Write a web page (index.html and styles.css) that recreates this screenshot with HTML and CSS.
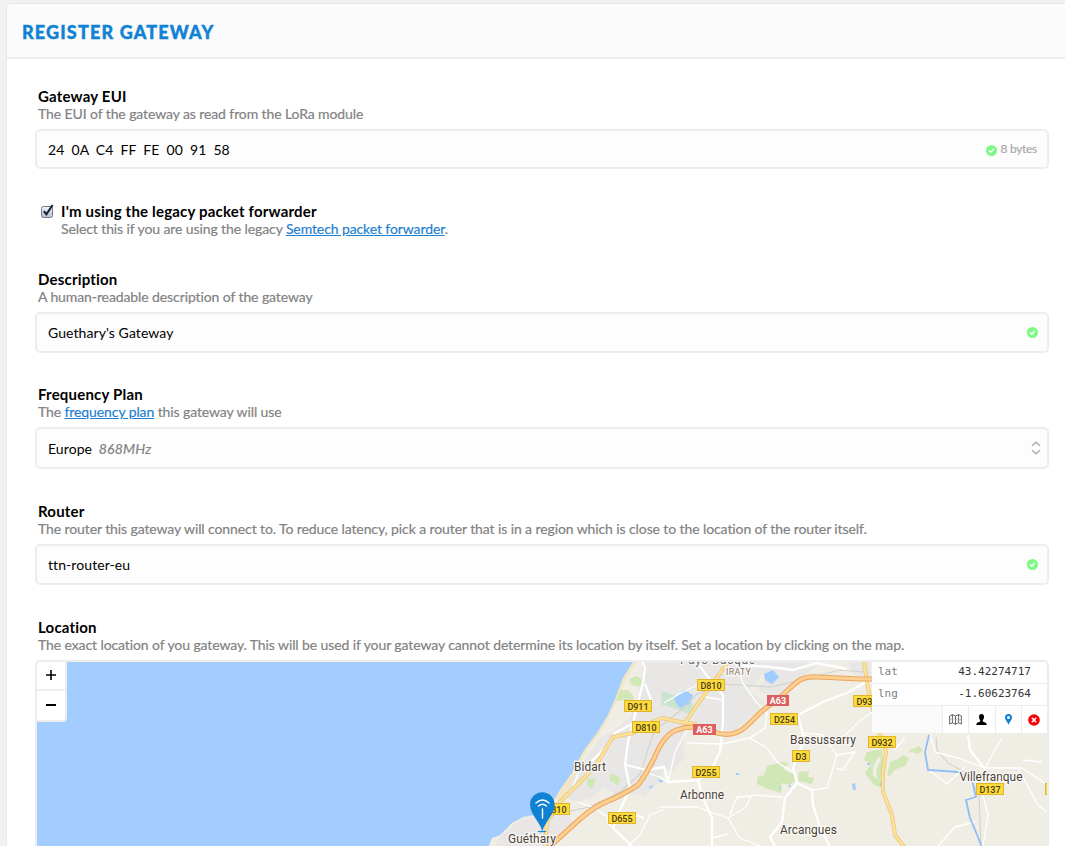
FILE: index.html
```html
<!DOCTYPE html>
<html lang="en">
<head>
<meta charset="utf-8">
<title>Register Gateway</title>
<link rel="stylesheet" href="styles.css">
</head>
<body>
<svg class="defs" width="0" height="0">
  <symbol id="ok" viewBox="0 0 11 11"><circle cx="5.5" cy="5.5" r="5.5" fill="#7bfb85"/><path d="M3 5.6 4.9 7.3 8 3.7" fill="none" stroke="#fff" stroke-width="1.5"/></symbol>
</svg>
<main class="card">
  <header class="card-header"><h1 class="title">REGISTER GATEWAY</h1></header>
  <form class="form">
    <section class="field">
      <label class="label">Gateway EUI</label>
      <p class="hint">The EUI of the gateway as read from the LoRa module</p>
      <div class="box box-eui"><span class="eui">24 0A C4 FF FE 00 91 58</span><span class="status"><svg class="ok"><use href="#ok"/></svg><span class="bytes">8 bytes</span></span></div>
    </section>
    <section class="field field-check">
      <svg class="checkbox" viewBox="0 0 14 15"><defs><linearGradient id="cb" x2="0" y2="1"><stop stop-color="#f4f6fa"/><stop offset="1" stop-color="#b4bfd0"/></linearGradient></defs><rect x="1.5" y="2.5" width="11" height="11" rx="2" fill="url(#cb)" stroke="#727986"/><path d="M3.8 7.2 6.4 10.3 12.6 1" fill="none" stroke="#172033" stroke-width="2.1"/></svg>
      <div>
        <label class="label label-check">I'm using the legacy packet forwarder</label>
        <p class="hint hint-check">Select this if you are using the legacy <a class="link">Semtech packet forwarder</a>.</p>
      </div>
    </section>
    <section class="field field-desc">
      <label class="label">Description</label>
      <p class="hint">A human-readable description of the gateway</p>
      <div class="box"><span>Guethary's Gateway</span><svg class="ok"><use href="#ok"/></svg></div>
    </section>
    <section class="field field-plan">
      <label class="label">Frequency Plan</label>
      <p class="hint">The <a class="link">frequency plan</a> this gateway will use</p>
      <div class="box box-plan"><span class="plan">Europe <em class="mhz">868MHz</em></span><svg class="sorter" viewBox="0 0 10 14"><path d="M1 4.8 5 1.2 9 4.8M1 9.2 5 12.8 9 9.2" fill="none" stroke="#aaa" stroke-width="1.3"/></svg></div>
    </section>
    <section class="field">
      <label class="label">Router</label>
      <p class="hint">The router this gateway will connect to. To reduce latency, pick a router that is in a region which is close to the location of the router itself.</p>
      <div class="box"><span>ttn-router-eu</span><svg class="ok"><use href="#ok"/></svg></div>
    </section>
    <section class="field">
      <label class="label">Location</label>
      <p class="hint">The exact location of you gateway. This will be used if your gateway cannot determine its location by itself. Set a location by clicking on the map.</p>
      <div class="map">
        <svg class="tiles" viewBox="37 662 1010 186">
          <rect x="37" y="662" width="1010" height="186" fill="#a3ccff"/>
          <path fill="#f0ede5" d="M633 662 623 678 616 697 608 715 597 733 583 752 572 773 560 790 554 800 535 815 523 817 512 823 500 835 492 838 488 848H1047V662Z"/>
          <g fill="#e8e7e6">
            <path d="M643 662H754L762 674 749 691 765 703 748 719 735 730 707 730 690 723 681 743 682 762 667 767 658 783 644 797 629 792 619 796 604 787 594 797 578 802 563 797 571 781 585 760 600 738 615 730 630 717 638 697Z"/>
            <path d="M536 817 520 820 500 836 494 848H547L575 824 564 809ZM748 662H801L817 667 797 680 778 698 758 691 766 676Z"/>
            <path d="M660 732 683 736 685 757 672 772 660 764ZM848 662H870V678L857 680Z"/>
          </g>
          <path fill="#f4e3b4" d="M633 662 623 678 616 697 608 715 597 733 583 752 572 773 560 790 554 800 562 801 570 786 577 769 587 750 600 733 610 715 618 697 626 679 636 662Z" opacity=".7"/>
          <g fill="#d2e7b6">
            <path d="m629 679 8-3 7 5-2 6-11-2ZM620 690l8 0 6 7-1 4-8-1-9 1Z"/>
            <path d="m610 774 7 1 3 5-2 5-8-4ZM587 778l5 1 4-1-2 6-2 5-5-3Z"/>
            <path d="m757 777 7-2 3-9 15-4 7 1-6 6 10 5 4 6-8 5-7-2-1 10-13-4-11-5ZM799 772l10-1-1 6 6 1-2 6-14-3Z"/>
            <path fill-rule="evenodd" d="m867 752 15-3 2 17-2 22-8-3-9-12 6-9-7-4ZM873 767l5-10 3 2-5 12 2 8-5-3ZM890 762l8-3 5-4 6 3-4 8-11 4-4 6-3-1ZM908 751l11-5 4 4-5 4Z"/>
          </g>
          <path fill="#cae4ce" d="m661 691 18 6 9-8 3 13 5 8-5 5-20-8-9-2Z"/>
          <g fill="#a0ccff">
            <path d="m674 698 10-8 9 5-3 9-10 4-4-5ZM764 674l9-4 6 7-7 7-7-4ZM649 787l3-2 1 1-3 3ZM658 779l6 2-4 2ZM852 784l3-1 1 7-3 0ZM778 787l3 1-1 2ZM788 785l3 0-1 3ZM736 773h3v2h-3ZM867 763h3v2h-3ZM880 782l2 0v4h-2Z"/>
          </g>
          <g fill="none" stroke="#d3d1ce" stroke-width="1.1">
            <path d="M550 815 590 807 620 792 640 774 654 731 680 711 697 694 723 684 770 687 793 682 840 670 863 672M936 737 937 750 948 763 968 774 979 795 981 846"/>
          </g>
          <g fill="none" stroke="#fff" stroke-width="1.3" stroke-linejoin="round">
            <path d="M664 703 681 693 706 681M700 696 723 700M742 682 757 703 767 713 765 728 750 738 722 744 687 743M750 738 767 748 777 762 792 772M805 733 823 735 837 755 827 788 813 790M837 755 855 752 843 770 836 768M660 807 697 807 710 812 728 818 745 808 752 795 783 797M728 818 740 838 760 846M712 838 728 834M730 815 737 797 752 796M803 735 837 743 861 720 872 712M663 810 650 815 640 835 628 846M667 782 660 777 650 774M688 728 675 752 668 782M577 802 593 807 608 817 608 823 613 828M583 762 574 784 571 793"/>
            <path d="M930 735 935 752 958 758 985 768 1002 738M985 768 1022 768 1037 778 1047 785M982 792 988 815 983 846M938 846 955 827 975 822M1023 760 1042 762M1018 768 1038 805 1047 812M965 767 947 784 929 770M905 738 894 750M735 662 743 682"/>
          </g>
          <g fill="none" stroke="#fff" stroke-width="2.3" stroke-linejoin="round">
            <path d="M643 662 645 668 643 682 635 715 628 742 625 765 630 788 620 810 613 828 632 846M645 684 652 702M613 734 632 724M605 748 591 762M626 765 647 770 664 767 668 782 698 780M697 662 710 680 723 695 723 722 720 752 710 772 698 780 703 798 712 818 712 846"/>
            <path d="M866 682 847 693 823 702 798 715 803 735 802 745 793 768 797 783 785 798 782 822 770 837 775 846M797 783 812 790 813 805 820 828 830 846M740 665 770 667 793 670 817 663 847 669"/>
            <path d="M968 735 970 750 984 768 986 780 980 790M608 822 630 813 644 818"/>
          </g>
          <path fill="none" stroke="#8fbdf8" stroke-width="1.8" d="M929 735 925 752 928 770 958 772 972 780 976 797 966 800 970 818 978 837 982 848"/>
          <path fill="none" stroke="#e9c477" stroke-width="4" stroke-linejoin="round" d="M697 724 685 723 662 718 650 723 633 733 613 737 605 750 598 762 587 775 560 802 547 822 545 848M685 723 697 705 728 662M864 662 867 682 870 698 880 735 886 752 883 772 883 792 892 815 895 835 905 848"/>
          <path fill="none" stroke="#fbe19a" stroke-width="2.6" stroke-linejoin="round" d="M697 724 685 723 662 718 650 723 633 733 613 737 605 750 598 762 587 775 560 802 547 822 545 848M685 723 697 705 728 662M864 662 867 682 870 698 880 735 886 752 883 772 883 792 892 815 895 835 905 848"/>
          <path fill="none" stroke="#e9a762" stroke-width="5.2" stroke-linejoin="round" d="M548 848 580 819Q595 806 608 801T638 785Q648 772 657 752T680 729Q693 724 717 733Q732 737 743 729C752 722 760 711 770 705C783 697 790 686 800 680Q807 676 818 677L860 679H872"/>
          <path fill="none" stroke="#ffcf91" stroke-width="3" stroke-linejoin="round" d="M548 848 580 819Q595 806 608 801T638 785Q648 772 657 752T680 729Q693 724 717 733Q732 737 743 729C752 722 760 711 770 705C783 697 790 686 800 680Q807 676 818 677L860 679H872"/>
          <g class="shield">
            <rect x="697.5" y="679.5" width="27" height="11"/><rect x="624.5" y="700.5" width="27" height="11"/><rect x="632.5" y="721.5" width="27" height="11"/><rect x="542.5" y="803.5" width="27" height="11"/><rect x="608.5" y="812.5" width="27" height="11"/><rect x="770.5" y="713.5" width="27" height="11"/><rect x="792.5" y="750.5" width="17" height="11"/><rect x="692.5" y="766.5" width="27" height="11"/><rect x="853.5" y="695.5" width="27" height="11"/><rect x="868.5" y="736.5" width="27" height="11"/><rect x="976.5" y="783.5" width="27" height="11"/><rect x="1045.5" y="783.5" width="27" height="11"/>
          </g>
          <g fill="#dc6062"><rect x="767" y="695" width="22" height="11"/><rect x="693" y="724" width="23" height="11"/></g>
          <g class="shield-text">
            <text x="711" y="688.5">D810</text><text x="638" y="709.5">D911</text><text x="646" y="730.5">D810</text><text x="556" y="812.5">D810</text><text x="622" y="821.5">D655</text><text x="784.5" y="722.5">D254</text><text x="801" y="759.5">D3</text><text x="706" y="775.5">D255</text><text x="867" y="704.5">D932</text><text x="882" y="745.5">D932</text><text x="990" y="792.5">D137</text>
            <text class="white" x="778" y="704">A63</text><text class="white" x="704.5" y="733">A63</text>
          </g>
          <g class="town">
            <text x="574" y="770.500" textLength="32">Bidart</text><text x="508" y="842.500" textLength="48">Guéthary</text><text x="680" y="798.500" textLength="44">Arbonne</text><text x="790" y="743.500" textLength="66">Bassussarry</text><text x="780" y="833.500" textLength="57">Arcangues</text><text x="959.5" y="780.500" textLength="63">Villefranque</text><text class="region" x="680" y="663.5" textLength="75">Pays Basque</text><text class="station" x="726" y="675" textLength="25">IRATY</text>
          </g>
          <ellipse cx="542" cy="831.5" rx="4.5" ry=".8" fill="#1683d4"/>
          <path fill="#1182d3" d="M542.3 831C540 822 530 814 530 804.500A12.300 12.300 0 0 1 554.600 804.500C554.600 814 545 822 542.300 831Z"/>
          <path fill="none" stroke="#fff" stroke-width="1.4" stroke-linecap="round" d="M542.500 809V818M538.500 806Q542.500 802.500 546.500 806M536 803Q542.500 797 549 803"/>
        </svg>
        <div class="zoom"><span class="zoom-btn zoom-in"><svg viewBox="0 0 10 10"><path d="M0 5H10M5 0V10" stroke="#000" stroke-width="1.6"/></svg></span><span class="zoom-btn"><svg viewBox="0 0 10 10"><path d="M0 5H10" stroke="#000" stroke-width="1.8"/></svg></span></div>
        <div class="coords">
          <div class="coord"><span class="key">lat</span><span>43.42274717</span></div>
          <div class="coord"><span class="key">lng</span><span>-1.60623764</span></div>
          <div class="tools">
            <span class="tool"><svg width="13" height="11" viewBox="0 0 13 11"><path d="M.6 2 3.400.6 6.500 2 9.600.6 12.400 2V10L9.600 8.800 6.500 10.300 3.400 8.800.6 10ZM3.400.6V8.800M6.500 2V10.300M9.600.6V8.800" fill="none" stroke="#555" stroke-width=".9"/><path d="M.6 5.800 3.400 4.400 6.500 5.200 9.600 6.500 12.400 4.500" fill="none" stroke="#999" stroke-width=".6"/></svg></span>
            <span class="tool"><svg width="11" height="11" viewBox="0 0 11 11"><path d="M5.500 0C7.400 0 8.200 1.300 8 3.200 7.900 4.600 7.200 5.500 6.800 6.100V7.500L10.200 9 10.800 11H.2L.8 9 4.200 7.500V6.100C3.800 5.500 3.100 4.600 3 3.200 2.800 1.300 3.600 0 5.500 0Z"/></svg></span>
            <span class="tool"><svg width="7" height="11" viewBox="0 0 7 11"><path fill-rule="evenodd" fill="#1182d3" d="M3.500 11C2.500 7.500 0 6 0 3.500A3.500 3.500 0 0 1 7 3.500C7 6 4.500 7.500 3.500 11ZM3.500 2A1.500 1.500 0 1 0 3.500 5 1.500 1.500 0 0 0 3.500 2Z"/></svg></span>
            <span class="tool"><svg width="12" height="12" viewBox="0 0 12 12"><circle cx="6" cy="6" r="5.800" fill="#f80000"/><path d="m3.800 3.800 4.400 4.400M8.200 3.800 3.800 8.200" stroke="#fff" stroke-width="1.500"/></svg></span>
          </div>
        </div>
      </div>
    </section>
  </form>
</main>
</body>
</html>
```
FILE: styles.css
```css
* { box-sizing: border-box; }
html, body { height: 846px; overflow: hidden; }
body { margin: 0; padding: 3px 0 0 6px; background: #f1f1f1; font-family: Lato, sans-serif; font-size: 14px; color: #000; }
.defs { position: absolute; }
.card { height: 860px; background: #fff; border: 1px solid #e9e9e9; border-right: 0; border-top-left-radius: 5px; overflow: hidden; }
.card-header { height: 55px; background: #fbfbfb; border-bottom: 2px solid #ededed; padding: 0 15px; display: flex; align-items: center; }
.title { margin: 3px 0 0; font-size: 18px; line-height: 24px; font-weight: 900; letter-spacing: 1.15px; color: #1182d3; -webkit-text-stroke: .4px #1182d3; white-space: nowrap; }
.form { padding: 28px 16px 0 28px; }
.field { margin-bottom: 33px; }
.field-check { display: flex; margin-bottom: 32px; padding-left: 5px; }
.field-desc { margin-bottom: 32px; }
.checkbox { width: 14px; height: 15px; margin: 2px 7px 0 0; flex: none; }
.label { display: block; margin-left: 3px; font-size: 15px; line-height: 18px; font-weight: 700; letter-spacing: .19px; white-space: nowrap; }
.hint { margin: 0 0 6px 3px; line-height: 18px; letter-spacing: -.1px; color: #828282; -webkit-text-stroke: .2px #828282; white-space: nowrap; }
.label-check, .hint-check { margin-left: 0; margin-bottom: 0; }
.link { color: #1f7fd0; -webkit-text-stroke-color: #1f7fd0; text-decoration: underline; }
.box { height: 41px; border: 2px solid #ededed; border-radius: 5px; background: #fdfdfd; padding: 0 9px 0 11px; display: flex; align-items: center; justify-content: space-between; line-height: 18px; letter-spacing: .08px; }
.box-eui { height: 40px; padding: 2px 10px 0 11px; }
.box-plan { height: 42px; padding-right: 6px; }
.eui { word-spacing: 3.4px; }
.plan { padding-top: 2px; }
.status { display: flex; align-items: center; gap: 4px; }
.bytes { margin-top: -2px; font-size: 12px; letter-spacing: -.3px; color: #aaa; -webkit-text-stroke: .2px #aaa; }
.ok { width: 11px; height: 11px; }
.sorter { width: 10px; height: 14px; }
.mhz { margin-left: 3px; letter-spacing: .2px; color: #828282; -webkit-text-stroke: .2px #828282; }
.map { position: relative; height: 190px; border: 2px solid #ededed; border-radius: 5px; overflow: hidden; }
.tiles { display: block; width: 1010px; height: 186px; font-family: Roboto, sans-serif; }
.shield rect { fill: #fedb3d; stroke: #dfb52e; }
.shield-text { font-size: 9px; font-weight: 500; text-anchor: middle; fill: #473c16; }
.shield-text .white { fill: #fff; font-weight: 700; }
.town { font-size: 12px; fill: #4b4137; stroke: #f8f7f4; stroke-width: 2.5px; paint-order: stroke; }
.town .region { fill: #666; }
.town .station { font-size: 9px; fill: #8d7769; }
.zoom { position: absolute; top: 0; left: 0; width: 30px; height: 60px; border: 2px solid #ededed; border-width: 0 2px 2px 0; border-bottom-right-radius: 4px; background: #fff; }
.zoom-btn { display: flex; height: 29px; padding-bottom: 1px; align-items: center; justify-content: center; }
.zoom-in { border-bottom: 2px solid #ededed; }
.zoom svg { width: 10px; height: 10px; }
.coords { position: absolute; top: 0; right: 0; width: 175px; height: 71px; background: #fff; border-bottom-left-radius: 4px; overflow: hidden; font: 11px/20px "DejaVu Sans Mono", monospace; color: #333; }
.coord { display: flex; justify-content: space-between; height: 22px; padding: 0 16px 0 6px; border-bottom: 1px solid #ededed; }
.key { color: #808080; }
.tools { display: flex; height: 27px; padding-left: 70px; background: #fafafa; }
.tool { flex: 1; border-left: 1px solid #ededed; background: #fff; display: flex; align-items: center; justify-content: center; }
```
